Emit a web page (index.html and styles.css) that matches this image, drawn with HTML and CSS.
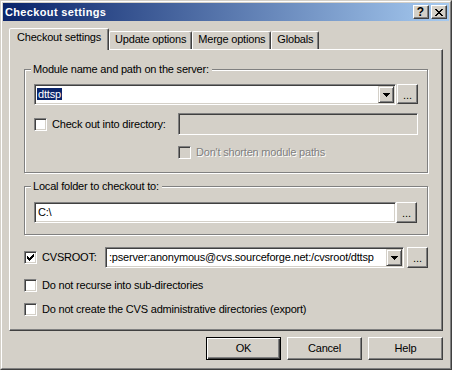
FILE: index.html
```html
<!DOCTYPE html>
<html lang="en">
<head>
    <meta charset="UTF-8">
    <title>Checkout settings</title>
    <link rel="stylesheet" href="styles.css">
</head>
<body>
    <div class="window">
        <div class="frame">
            <div class="titlebar">
                <span class="title">Checkout settings</span>
                <div class="caption-buttons">
                    <span class="cap-btn help">?</span>
                    <span class="cap-btn close">
                        <svg width="8" height="7" viewBox="0 0 8 7" shape-rendering="crispEdges">
                            <path d="M0 0h2v1h-2z M6 0h2v1h-2z M1 1h2v1h-2z M5 1h2v1h-2z M2 2h4v1h-4z M3 3h2v1h-2z M2 4h4v1h-4z M1 5h2v1h-2z M5 5h2v1h-2z M0 6h2v1h-2z M6 6h2v1h-2z" fill="#000"/>
                        </svg>
                    </span>
                </div>
            </div>

            <div class="content">
                <div class="tabs">
                    <div class="tab active">Checkout settings</div>
                    <div class="tab">Update options</div>
                    <div class="tab">Merge options</div>
                    <div class="tab">Globals</div>
                </div>

                <div class="panel">
                    <fieldset class="group group-module">
                        <legend>Module name and path on the server:</legend>
                        <div class="row">
                            <div class="combo">
                                <span class="combo-text"><span class="sel">dttsp</span></span>
                                <span class="drop">
                                    <svg width="7" height="4" viewBox="0 0 7 4" shape-rendering="crispEdges">
                                        <path d="M0 0h7v1h-7z M1 1h5v1h-5z M2 2h3v1h-3z M3 3h1v1h-1z" fill="#000"/>
                                    </svg>
                                </span>
                            </div>
                            <span class="btn dots dots-module">...</span>
                        </div>
                        <div class="row row-dir">
                            <label class="check">
                                <span class="box"></span>
                                Check out into directory:
                            </label>
                            <div class="edit disabled dir-edit"></div>
                        </div>
                        <div class="row row-shorten">
                            <label class="check disabled">
                                <span class="box"></span>
                                Don't shorten module paths
                            </label>
                        </div>
                    </fieldset>

                    <fieldset class="group group-local">
                        <legend>Local folder to checkout to:</legend>
                        <div class="row">
                            <div class="edit local-edit">C:\</div>
                            <span class="btn dots dots-local">...</span>
                        </div>
                    </fieldset>

                    <div class="row row-cvsroot">
                        <label class="check cvs-label">
                            <span class="box">
                                <svg width="7" height="7" viewBox="0 0 7 7" shape-rendering="crispEdges">
                                    <path d="M0 2h1v3h-1z M1 3h1v3h-1z M2 4h1v3h-1z M3 3h1v3h-1z M4 2h1v3h-1z M5 1h1v3h-1z M6 0h1v3h-1z" fill="#000"/>
                                </svg>
                            </span>
                            CVSROOT:
                        </label>
                        <div class="combo cvs-combo">
                            <span class="combo-text">:pserver:anonymous@cvs.sourceforge.net:/cvsroot/dttsp</span>
                            <span class="drop">
                                <svg width="7" height="4" viewBox="0 0 7 4" shape-rendering="crispEdges">
                                    <path d="M0 0h7v1h-7z M1 1h5v1h-5z M2 2h3v1h-3z M3 3h1v1h-1z" fill="#000"/>
                                </svg>
                            </span>
                        </div>
                        <span class="btn dots dots-cvs">...</span>
                    </div>

                    <div class="row row-option">
                        <label class="check">
                            <span class="box"></span>
                            Do not recurse into sub-directories
                        </label>
                    </div>
                    <div class="row row-option">
                        <label class="check">
                            <span class="box"></span>
                            Do not create the CVS administrative directories (export)
                        </label>
                    </div>
                </div>

                <div class="buttons">
                    <span class="btn push default">OK</span>
                    <span class="btn push">Cancel</span>
                    <span class="btn push">Help</span>
                </div>
            </div>
        </div>
    </div>
</body>
</html>
```

FILE: styles.css
```css
* {
    margin: 0;
    padding: 0;
    box-sizing: border-box;
}

body {
    width: 452px;
    height: 370px;
    overflow: hidden;
    background: #d4d0c8;
    font-family: "Liberation Sans", Arial, sans-serif;
    font-size: 11px;
    letter-spacing: -0.2px;
    line-height: 13px;
    color: #000;
}

/* window chrome */

.window {
    width: 452px;
    height: 370px;
    border: 1px solid;
    border-color: #d4d0c8 #404040 #404040 #d4d0c8;
}

.frame {
    height: 100%;
    padding: 1px;
    border: 1px solid;
    border-color: #fff #808080 #808080 #fff;
}

.titlebar {
    height: 18px;
    padding: 0 2px;
    display: flex;
    align-items: center;
    justify-content: space-between;
    background: linear-gradient(to right, #0a246a, #a6caf0);
}

.title {
    color: #fff;
    font-weight: bold;
    letter-spacing: 0.35px;
}

.caption-buttons {
    display: flex;
    gap: 2px;
}

.cap-btn {
    width: 16px;
    height: 14px;
    display: flex;
    align-items: center;
    justify-content: center;
    background: #d4d0c8;
    border: 1px solid;
    border-color: #fff #404040 #404040 #fff;
    box-shadow: inset -1px -1px #808080;
}

.cap-btn.help {
    font-weight: bold;
    font-size: 12px;
    letter-spacing: 0;
    padding-right: 1px;
}

.cap-btn.close svg {
    margin-left: -1px;
}

.content {
    padding: 0 6px;
}

/* tabs */

.tabs {
    display: flex;
    align-items: flex-end;
    height: 21px;
    margin-top: 7px;
}

.tab {
    height: 18px;
    padding: 1px 5px 0;
    white-space: nowrap;
    border: 1px solid;
    border-bottom: none;
    border-color: #fff #404040 transparent #fff;
    border-radius: 2px 2px 0 0;
    box-shadow: inset -1px 0 #808080;
}

.tab.active {
    position: relative;
    z-index: 1;
    height: 22px;
    margin-bottom: -1px;
    padding: 2px 7px 0;
    background: #d4d0c8;
}

.panel {
    height: 282px;
    padding: 13px 14px 0 14px;
    border: 1px solid;
    border-color: #fff #404040 #404040 #fff;
    box-shadow: inset -1px -1px #808080;
}

/* group boxes */

.group {
    min-width: 0;
    border: 1px solid #808080;
    box-shadow: inset 1px 1px #fff, 1px 1px #fff;
}

.group legend {
    position: relative;
    margin-left: -3px;
    padding: 0 3px 0 2px;
    line-height: 13px;
    background: #d4d0c8;
}

.group-module {
    padding: 8px 9px 13px;
}

.group-local {
    margin-top: 7px;
    padding: 9px 10px 11px 9px;
}

.row {
    display: flex;
    align-items: flex-start;
}

.row-dir {
    margin-top: 8px;
    align-items: center;
}

.row-shorten {
    margin-top: 11px;
    padding-left: 144px;
}

.row-cvsroot {
    margin-top: 12px;
    align-items: center;
}

.row-option {
    margin-top: 11px;
}

/* controls */

.check {
    display: flex;
    align-items: center;
    gap: 5px;
    white-space: nowrap;
    flex: 1;
}

.cvs-label {
    flex: none;
    width: 81px;
}

.box {
    width: 13px;
    height: 13px;
    padding: 2px;
    flex: none;
    display: flex;
    background: #fff;
    border: 1px solid;
    border-color: #808080 #fff #fff #808080;
    box-shadow: inset 1px 1px #404040, inset -1px -1px #d4d0c8;
}

.check.disabled {
    color: #808080;
    text-shadow: 1px 1px #fff;
}

.check.disabled .box {
    background: #d4d0c8;
}

.combo,
.edit {
    display: flex;
    align-items: center;
    height: 21px;
    padding: 1px;
    background: #fff;
    border: 1px solid;
    border-color: #808080 #fff #fff #808080;
    box-shadow: inset 1px 1px #404040, inset -1px -1px #d4d0c8;
    white-space: nowrap;
    overflow: hidden;
}

.combo {
    flex: 1;
}

.combo-text {
    flex: 1;
    padding-left: 1px;
    overflow: hidden;
}

.sel {
    padding: 0 1px;
    background: #0a246a;
    color: #fff;
}

.drop {
    width: 16px;
    height: 17px;
    flex: none;
    display: flex;
    align-items: center;
    justify-content: center;
    background: #d4d0c8;
    border: 1px solid;
    border-color: #d4d0c8 #404040 #404040 #d4d0c8;
    box-shadow: inset 1px 1px #fff, inset -1px -1px #808080;
}

.edit.disabled {
    background: #d4d0c8;
}

.dir-edit {
    width: 240px;
    height: 22px;
}

.local-edit {
    flex: 1;
    padding-left: 3px;
}

.cvs-combo {
    flex: none;
    width: 299px;
}

.cvs-combo .combo-text {
    padding-left: 2px;
}

.btn {
    display: flex;
    align-items: center;
    justify-content: center;
    flex: none;
    background: #d4d0c8;
    border: 1px solid;
    border-color: #fff #404040 #404040 #fff;
    box-shadow: inset -1px -1px #808080;
}

.dots {
    width: 21px;
    height: 20px;
    letter-spacing: 0;
    padding-top: 2px;
}

.dots-module {
    margin-left: 1px;
}

.dots-local {
    height: 21px;
}

.dots-cvs {
    height: 21px;
    margin-left: 3px;
}

.buttons {
    display: flex;
    justify-content: flex-end;
    gap: 6px;
    margin-top: 6px;
}

.push {
    width: 75px;
    height: 23px;
}

.push.default {
    border-color: #000;
    box-shadow: inset 1px 1px #fff, inset -1px -1px #404040, inset -2px -2px #808080;
}
```
